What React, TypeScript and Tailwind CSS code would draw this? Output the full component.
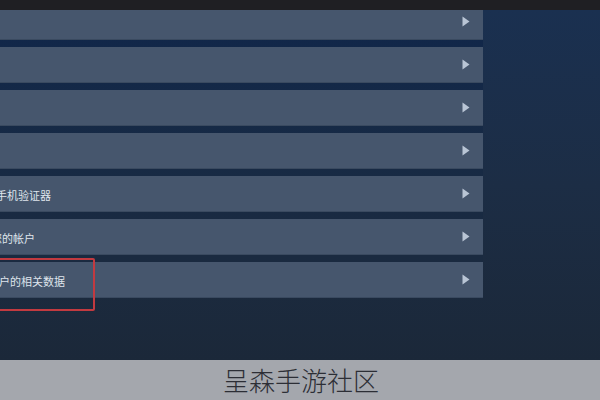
import React from 'react'

const rows = [
  { label: '', shift: 0 },
  { label: '', shift: 0 },
  { label: '', shift: 0 },
  { label: '', shift: 0 },
  { label: '令牌手机验证器', shift: -26 },
  { label: '删除您的帐户', shift: -31 },
  { label: '您帐户的相关数据', shift: -23 },
]

function Arrow() {
  return (
    <svg width="8" height="11" viewBox="0 0 8 11" className="shrink-0">
      <path d="M0.5 0.5 L7.5 5.5 L0.5 10.5 Z" fill="#b9c5d5" />
    </svg>
  )
}

export default function App() {
  return (
    <div
      className="w-[600px] h-[400px] flex flex-col overflow-hidden bg-[#1b2a3e]"
      style={{ fontFamily: '"Noto Sans CJK SC", "Noto Sans", sans-serif' }}
    >
      <div className="h-[10px] shrink-0 bg-[#1f1f23]" />

      <div className="relative flex-1 overflow-hidden bg-linear-to-b from-[#1a3050] via-[#1c2d45] to-[#1b2839]">
        <div className="-mt-[6px] flex w-[483px] flex-col gap-[8px] bg-linear-to-b from-[#10264a] via-[#172a45] to-[#1b2a3e]">
          {rows.map((row, i) => (
            <div
              key={i}
              className="flex h-[35px] items-center justify-between overflow-hidden bg-[#46566d] pr-[13px] shadow-[0_1px_0_#3a4a60]"
            >
              <span
                className="whitespace-nowrap pt-[3px] text-[11px] leading-none text-[#dfe5ec]"
                style={{ marginLeft: row.shift }}
              >
                {row.label}
              </span>
              <Arrow />
            </div>
          ))}
        </div>

        {/* highlight box */}
        <div className="absolute left-[-10px] top-[248px] h-[53px] w-[105px] rounded-[2px] border-2 border-[#c23a40]" />
      </div>

      <div className="flex h-[40px] shrink-0 items-center justify-center bg-[#a4a7ad]">
        <span className="pl-[2px] text-[26px] font-light leading-none text-[#2c2e35]">呈森手游社区</span>
      </div>
    </div>
  )
}
